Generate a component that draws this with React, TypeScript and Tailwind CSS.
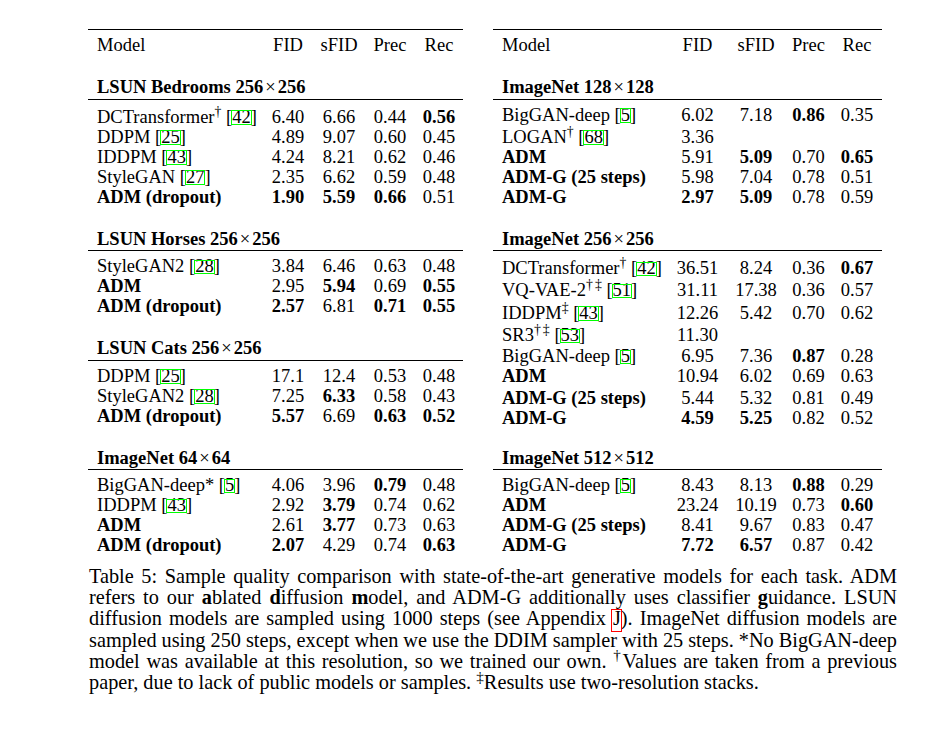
import React from "react";

type Row = { h?: string; name: React.ReactNode; bold?: boolean; vals: string[] };
type Section = { title: React.ReactNode; mt: string; rows: Row[] };

const Cite = ({ n }: { n: string }) => (
  <>
    [
    <span className="relative">
      {n}
      <span className="pointer-events-none absolute left-[-1px] right-[-1px] top-[3.5px] bottom-[2px] border-[1.5px] border-[#00ff00]" />
    </span>
    ]
  </>
);

const X = () => <span className="font-normal mx-[2px]">×</span>;

const leftSections: Section[] = [
  {
    title: (<>LSUN Bedrooms 256<X />256</>),
    mt: "mt-[22px]",
    rows: [
      { h: "h-[22px]", name: (<>DCTransformer<sup>†</sup> <Cite n="42" /></>), vals: ["6.40", "6.66", "0.44", "!0.56"] },
      { name: (<>DDPM <Cite n="25" /></>), vals: ["4.89", "9.07", "0.60", "0.45"] },
      { name: (<>IDDPM <Cite n="43" /></>), vals: ["4.24", "8.21", "0.62", "0.46"] },
      { name: (<>StyleGAN <Cite n="27" /></>), vals: ["2.35", "6.62", "0.59", "0.48"] },
      { name: "ADM (dropout)", bold: true, vals: ["!1.90", "!5.59", "!0.66", "0.51"] },
    ],
  },
  {
    title: (<>LSUN Horses 256<X />256</>),
    mt: "mt-[22px]",
    rows: [
      { name: (<>StyleGAN2 <Cite n="28" /></>), vals: ["3.84", "6.46", "0.63", "0.48"] },
      { name: "ADM", bold: true, vals: ["2.95", "!5.94", "0.69", "!0.55"] },
      { name: "ADM (dropout)", bold: true, vals: ["!2.57", "6.81", "!0.71", "!0.55"] },
    ],
  },
  {
    title: (<>LSUN Cats 256<X />256</>),
    mt: "mt-[22px]",
    rows: [
      { name: (<>DDPM <Cite n="25" /></>), vals: ["17.1", "12.4", "0.53", "0.48"] },
      { name: (<>StyleGAN2 <Cite n="28" /></>), vals: ["7.25", "!6.33", "0.58", "0.43"] },
      { name: "ADM (dropout)", bold: true, vals: ["!5.57", "6.69", "!0.63", "!0.52"] },
    ],
  },
  {
    title: (<>ImageNet 64<X />64</>),
    mt: "mt-[22px]",
    rows: [
      { name: (<>BigGAN-deep* <Cite n="5" /></>), vals: ["4.06", "3.96", "!0.79", "0.48"] },
      { name: (<>IDDPM <Cite n="43" /></>), vals: ["2.92", "!3.79", "0.74", "0.62"] },
      { name: "ADM", bold: true, vals: ["2.61", "!3.77", "0.73", "0.63"] },
      { name: "ADM (dropout)", bold: true, vals: ["!2.07", "4.29", "0.74", "!0.63"] },
    ],
  },
];

const rightSections: Section[] = [
  {
    title: (<>ImageNet 128<X />128</>),
    mt: "mt-[22px]",
    rows: [
      { name: (<>BigGAN-deep <Cite n="5" /></>), vals: ["6.02", "7.18", "!0.86", "0.35"] },
      { h: "h-[22px]", name: (<>LOGAN<sup>†</sup> <Cite n="68" /></>), vals: ["3.36", "", "", ""] },
      { name: "ADM", bold: true, vals: ["5.91", "!5.09", "0.70", "!0.65"] },
      { name: "ADM-G (25 steps)", bold: true, vals: ["5.98", "7.04", "0.78", "0.51"] },
      { name: "ADM-G", bold: true, vals: ["!2.97", "!5.09", "0.78", "0.59"] },
    ],
  },
  {
    title: (<>ImageNet 256<X />256</>),
    mt: "mt-[22px]",
    rows: [
      { h: "h-[22px]", name: (<>DCTransformer<sup>†</sup> <Cite n="42" /></>), vals: ["36.51", "8.24", "0.36", "!0.67"] },
      { h: "h-[22px]", name: (<>VQ-VAE-2<sup>†<span className="ml-[2px]">‡</span></sup> <Cite n="51" /></>), vals: ["31.11", "17.38", "0.36", "0.57"] },
      { h: "h-[22.5px]", name: (<>IDDPM<sup>‡</sup> <Cite n="43" /></>), vals: ["12.26", "5.42", "0.70", "0.62"] },
      { h: "h-[22.5px]", name: (<>SR3<sup>†<span className="ml-[2px]">‡</span></sup> <Cite n="53" /></>), vals: ["11.30", "", "", ""] },
      { h: "h-[21px]", name: (<>BigGAN-deep <Cite n="5" /></>), vals: ["6.95", "7.36", "!0.87", "0.28"] },
      { name: "ADM", bold: true, vals: ["10.94", "6.02", "0.69", "0.63"] },
      { h: "h-[21.5px]", name: "ADM-G (25 steps)", bold: true, vals: ["5.44", "5.32", "0.81", "0.49"] },
      { name: "ADM-G", bold: true, vals: ["!4.59", "!5.25", "0.82", "0.52"] },
    ],
  },
  {
    title: (<>ImageNet 512<X />512</>),
    mt: "mt-[20px]",
    rows: [
      { name: (<>BigGAN-deep <Cite n="5" /></>), vals: ["8.43", "8.13", "!0.88", "0.29"] },
      { name: "ADM", bold: true, vals: ["23.24", "10.19", "0.73", "!0.60"] },
      { name: "ADM-G (25 steps)", bold: true, vals: ["8.41", "9.67", "0.83", "0.47"] },
      { name: "ADM-G", bold: true, vals: ["!7.72", "!6.57", "0.87", "0.42"] },
    ],
  },
];

const leftWidths = [
  "w-[175px] pl-[9px] text-left",
  "w-[50px] text-center",
  "w-[52px] text-center",
  "w-[50px] text-center",
  "w-[48px] text-center",
];
const rightWidths = [
  "w-[175px] pl-[9px] text-left",
  "w-[59px] text-center",
  "w-[58px] text-center",
  "w-[47px] text-center",
  "w-[50px] text-center",
];

function Table({ widths, sections, w }: { widths: string[]; sections: Section[]; w: string }) {
  return (
    <div className={"flex flex-col " + w}>
      <div className="h-[1.5px] bg-black" />
      <div className="mt-[5px] flex h-[20px] leading-[20px]">
        {["Model", "FID", "sFID", "Prec", "Rec"].map((t, i) => (
          <div key={i} className={widths[i]}>
            {t}
          </div>
        ))}
      </div>
      {sections.map((s, si) => (
        <div key={si} className="flex flex-col">
          <div className={s.mt + " h-[20px] leading-[20px] font-bold pl-[9px] whitespace-nowrap"}>{s.title}</div>
          <div className="mt-[1.5px] h-px bg-black" />
          <div className="pt-[5px] flex flex-col">
            {s.rows.map((r, ri) => (
              <div key={ri} className={(r.h ?? "h-[20px]") + " flex items-end"}>
                <div className={widths[0] + " h-[20px] leading-[20px] whitespace-nowrap" + (r.bold ? " font-bold" : "")}>
                  {r.name}
                </div>
                {r.vals.map((v, vi) => {
                  const b = v.startsWith("!");
                  return (
                    <div
                      key={vi}
                      className={widths[vi + 1] + " h-[20px] leading-[20px] whitespace-nowrap" + (b ? " font-bold" : "")}
                    >
                      {b ? v.slice(1) : v}
                    </div>
                  );
                })}
              </div>
            ))}
          </div>
        </div>
      ))}
    </div>
  );
}

const J = () => (
  <span className="relative">
    J
    <span className="pointer-events-none absolute left-[-1.5px] right-[-1.5px] top-[2px] bottom-[-3px] border-[1.5px] border-[#ff0000]" />
  </span>
);

export default function App() {
  return (
    <div className="w-[949px] h-[739px] bg-white text-black font-['Liberation_Serif',serif] overflow-hidden">
      <div className="flex pt-[28.5px] pl-[88px] gap-[30px] text-[18.5px]">
        <Table widths={leftWidths} sections={leftSections} w="w-[375px]" />
        <Table widths={rightWidths} sections={rightSections} w="w-[389px]" />
      </div>
      <div className="ml-[89px] mt-[10.8px] w-[808px] text-[20.3px] leading-[21.3px]">
        <div className="text-justify [text-align-last:justify]">
          Table 5: Sample quality comparison with state-of-the-art generative models for each task. ADM
        </div>
        <div className="text-justify [text-align-last:justify]">
          refers to our <b>a</b>blated <b>d</b>iffusion <b>m</b>odel, and ADM-G additionally uses classifier <b>g</b>uidance. LSUN
        </div>
        <div className="text-justify [text-align-last:justify]">
          diffusion models are sampled using 1000 steps (see Appendix <J />). ImageNet diffusion models are
        </div>
        <div className="text-justify [text-align-last:justify] [word-spacing:-2px]">
          sampled using 250 steps, except when we use the DDIM sampler with 25 steps. *No BigGAN-deep
        </div>
        <div className="text-justify [text-align-last:justify]">
          model was available at this resolution, so we trained our own. <sup>†</sup>Values are taken from a previous
        </div>
        <div className="text-left">
          paper, due to lack of public models or samples. <sup>‡</sup>Results use two-resolution stacks.
        </div>
      </div>
    </div>
  );
}
